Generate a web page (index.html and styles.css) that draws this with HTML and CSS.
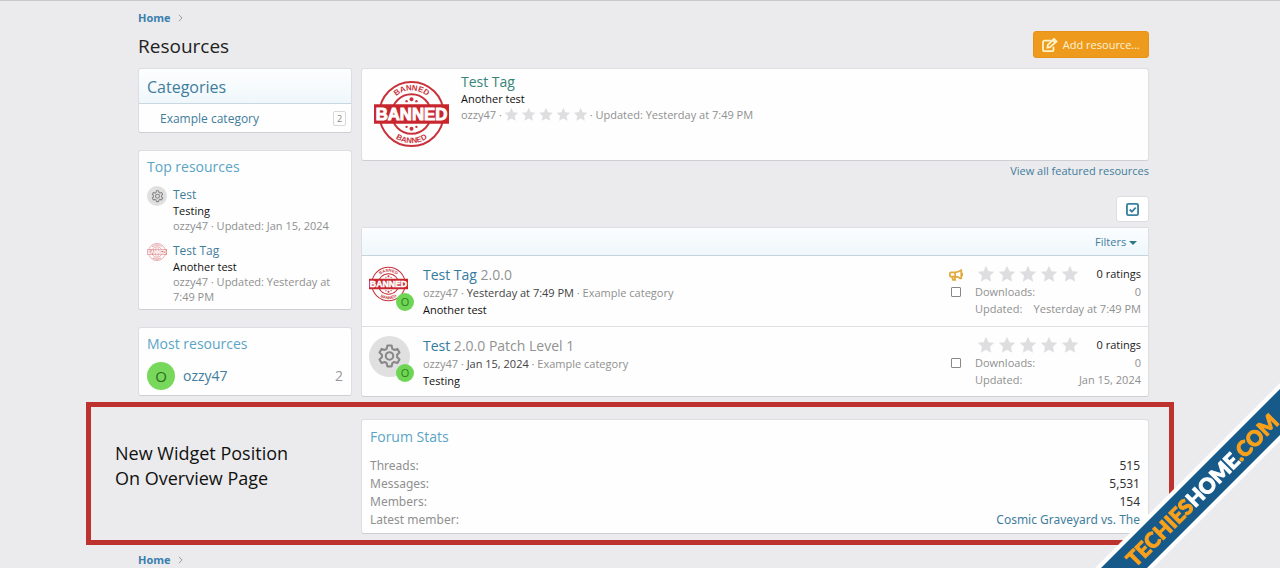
FILE: index.html
```
<!DOCTYPE html>
<html lang="en">
<head>
    <meta charset="UTF-8">
    <meta name="viewport" content="width=device-width, initial-scale=1.0">
    <title>Resources</title>
    <link rel="stylesheet" href="styles.css">
</head>
<body>
    <!-- Shared icons -->
    <svg class="sprite" aria-hidden="true">
        <symbol id="star" viewBox="0 0 24 24">
            <path d="M12 1l3.3 7.2 7.7.9-5.7 5.3 1.5 7.8L12 18.300l-6.800 3.900 1.500-7.800L1 9.100l7.700-.9z"/>
        </symbol>
        <symbol id="stars" viewBox="0 0 102 18">
            <use href="#star" x="0" y="0" width="18" height="18"/>
            <use href="#star" x="21" y="0" width="18" height="18"/>
            <use href="#star" x="42" y="0" width="18" height="18"/>
            <use href="#star" x="63" y="0" width="18" height="18"/>
            <use href="#star" x="84" y="0" width="18" height="18"/>
        </symbol>
        <symbol id="gear" viewBox="0 0 24 24">
            <g fill="none" stroke="currentColor" stroke-width="2" stroke-linejoin="round">
                <path d="M10 1.500h4l.7 3.100 1.900 1.100 3-1 2 3.500-2.300 2.100v2.400l2.300 2.100-2 3.500-3-1-1.900 1.100-.7 3.100h-4l-.7-3.100-1.900-1.100-3 1-2-3.500 2.300-2.100v-2.400L2.400 8.200l2-3.500 3 1 1.900-1.100z"/>
                <circle cx="12" cy="11.500" r="3.600"/>
            </g>
        </symbol>
        <symbol id="banned" viewBox="0 0 76 70">
            <defs>
                <path id="arc-top" d="M14 35a24 24 0 0 1 48 0"/>
                <path id="arc-bottom" d="M8.500 35a29.500 29.500 0 0 0 59 0"/>
            </defs>
            <g fill="none" stroke="#c8323c">
                <circle cx="38" cy="35" r="32.500" stroke-width="2"/>
                <circle cx="38" cy="35" r="20" stroke-width="2"/>
            </g>
            <g class="stamp-small">
                <text text-anchor="middle"><textPath href="#arc-top" startOffset="50%">BANNED</textPath></text>
                <text text-anchor="middle"><textPath href="#arc-bottom" startOffset="50%">BANNED</textPath></text>
            </g>
            <g fill="#c8323c">
                <circle cx="38" cy="20" r="2"/>
                <circle cx="33" cy="22" r="1.200"/>
                <circle cx="43" cy="22" r="1.200"/>
                <circle cx="38" cy="50" r="2"/>
                <circle cx="33" cy="48" r="1.200"/>
                <circle cx="43" cy="48" r="1.200"/>
            </g>
            <path fill="#c8262e" d="M0 25h76v20H0z"/>
            <text class="stamp-big" x="38" y="41" text-anchor="middle">BANNED</text>
        </symbol>
    </svg>

    <div class="page">
        <nav class="breadcrumb">
            <a href="#">Home</a>
            <svg viewBox="0 0 6 10"><path d="M1 1l4 4-4 4"/></svg>
        </nav>

        <header class="page-header">
            <h1>Resources</h1>
            <button type="button" class="button-add">
                <svg viewBox="0 0 18 16">
                    <path d="M10 3H3a2 2 0 0 0-2 2v8a2 2 0 0 0 2 2h8a2 2 0 0 0 2-2v-3"/>
                    <path d="M6 11l.500-3L13.500 1l3 3-7.500 6.500zM12 2.500l3 3"/>
                </svg>
                Add resource...
            </button>
        </header>

        <div class="layout">
            <aside class="sidebar">
                <section class="card">
                    <h2 class="card-header"><a href="#">Categories</a></h2>
                    <div class="category">
                        <a href="#">Example category</a>
                        <span class="count">2</span>
                    </div>
                </section>

                <section class="card widget">
                    <h3>Top resources</h3>
                    <div class="top-item">
                        <span class="icon-small"><svg><use href="#gear"/></svg></span>
                        <div>
                            <a href="#">Test</a>
                            <p class="tagline">Testing</p>
                            <p class="meta">ozzy47 · Updated: Jan 15, 2024</p>
                        </div>
                    </div>
                    <div class="top-item">
                        <svg class="stamp-icon"><use href="#banned"/></svg>
                        <div>
                            <a href="#">Test Tag</a>
                            <p class="tagline">Another test</p>
                            <p class="meta">ozzy47 · Updated: Yesterday at 7:49 PM</p>
                        </div>
                    </div>
                </section>

                <section class="card widget">
                    <h3>Most resources</h3>
                    <div class="member">
                        <span class="avatar">O</span>
                        <a href="#">ozzy47</a>
                        <span class="member-count">2</span>
                    </div>
                </section>
            </aside>

            <main class="content">
                <section class="card featured">
                    <svg class="featured-icon"><use href="#banned"/></svg>
                    <div>
                        <a class="featured-title" href="#">Test Tag</a>
                        <p class="tagline">Another test</p>
                        <p class="meta featured-meta">ozzy47 · <svg class="stars-small"><use href="#stars"/></svg> · Updated: Yesterday at 7:49 PM</p>
                    </div>
                </section>
                <a class="view-all" href="#">View all featured resources</a>

                <button type="button" class="button-select" aria-label="Select all">
                    <svg viewBox="0 0 14 14"><rect x="1" y="1" width="12" height="12" rx="1.500"/><path d="M4 7l2.300 2.300L10.500 5"/></svg>
                </button>

                <section class="card list">
                    <div class="filters"><a href="#">Filters <span class="caret"></span></a></div>

                    <article class="resource">
                        <div class="resource-icon">
                            <svg class="resource-stamp"><use href="#banned"/></svg>
                            <span class="avatar-mini">O</span>
                        </div>
                        <div class="resource-main">
                            <h4><a href="#">Test Tag</a> 2.0.0</h4>
                            <p class="meta">ozzy47 · <time>Yesterday at 7:49 PM</time> · Example category</p>
                            <p class="tagline">Another test</p>
                        </div>
                        <div class="flags">
                            <svg class="horn" viewBox="0 0 16 14"><path d="M14 1v11M14 2C11 4 9 4.500 7 4.500H2.500A1.500 1.500 0 0 0 1 6v2a1.500 1.500 0 0 0 1.500 1.500H7c2 0 4 .5 7 2.500M7 4.500v5M3.500 9.500l1 3.500h2.500l-.8-3.500M14 5.500a1.500 1.500 0 0 1 0 3"/></svg>
                            <input type="checkbox" aria-label="Select Test Tag">
                        </div>
                        <div class="stats">
                            <div class="rating"><svg class="stars"><use href="#stars"/></svg><span>0 ratings</span></div>
                            <dl><dt>Downloads:</dt><dd>0</dd></dl>
                            <dl><dt>Updated:</dt><dd>Yesterday at 7:49 PM</dd></dl>
                        </div>
                    </article>

                    <article class="resource">
                        <div class="resource-icon">
                            <span class="icon-large"><svg><use href="#gear"/></svg></span>
                            <span class="avatar-mini">O</span>
                        </div>
                        <div class="resource-main">
                            <h4><a href="#">Test</a> 2.0.0 Patch Level 1</h4>
                            <p class="meta">ozzy47 · <time>Jan 15, 2024</time> · Example category</p>
                            <p class="tagline">Testing</p>
                        </div>
                        <div class="flags">
                            <input type="checkbox" aria-label="Select Test">
                        </div>
                        <div class="stats">
                            <div class="rating"><svg class="stars"><use href="#stars"/></svg><span>0 ratings</span></div>
                            <dl><dt>Downloads:</dt><dd>0</dd></dl>
                            <dl><dt>Updated:</dt><dd>Jan 15, 2024</dd></dl>
                        </div>
                    </article>
                </section>
            </main>
        </div>

        <div class="highlight">
            <p class="note">New Widget Position<br>On Overview Page</p>
            <section class="card forum-stats">
                <h3>Forum Stats</h3>
                <dl><dt>Threads:</dt><dd>515</dd></dl>
                <dl><dt>Messages:</dt><dd>5,531</dd></dl>
                <dl><dt>Members:</dt><dd>154</dd></dl>
                <dl><dt>Latest member:</dt><dd><a href="#">Cosmic Graveyard vs. The</a></dd></dl>
            </section>
        </div>

        <nav class="breadcrumb">
            <a href="#">Home</a>
            <svg viewBox="0 0 6 10"><path d="M1 1l4 4-4 4"/></svg>
        </nav>
    </div>

    <!-- Corner ribbon -->
    <svg class="ribbon" viewBox="0 0 190 190">
        <path fill="#fff" d="M5 190L190 5v58L63 190z"/>
        <path fill="#175a8a" d="M11 190L190 11v46L57 190z"/>
        <text transform="translate(112 112) rotate(-45)" y="8" text-anchor="middle"><tspan>TECHIES</tspan><tspan class="ribbon-white">HOME</tspan><tspan>.COM</tspan></text>
    </svg>
</body>
</html>
```
FILE: styles.css
```
* {
    margin: 0;
    padding: 0;
    box-sizing: border-box;
}

body {
    font-family: "Open Sans", "Noto Sans", sans-serif;
    font-size: 11px;
    line-height: 16px;
    color: #222;
    background-color: #ebebed;
    border-top: 1px solid #c8c8ca;
    overflow: hidden;
}

a {
    color: #3f7d9c;
    text-decoration: none;
}

button {
    font: inherit;
    cursor: pointer;
}

.sprite {
    display: none;
}

.page {
    padding: 9px 131px 0 138px;
}

.breadcrumb {
    display: flex;
    align-items: center;
    gap: 7px;
    height: 16px;
}

.breadcrumb a {
    font-weight: bold;
    color: #3a7fae;
}

.breadcrumb svg {
    width: 5px;
    height: 8px;
    fill: none;
    stroke: #888;
}

.page-header {
    display: flex;
    justify-content: space-between;
    align-items: center;
    height: 27px;
    margin: 5px 0 10px;
}

.page-header h1 {
    padding-top: 3px;
    font-size: 19px;
    font-weight: normal;
}

.button-add {
    display: flex;
    align-items: center;
    gap: 5px;
    height: 27px;
    padding: 0 8px;
    color: #fff3d6;
    background-color: #ee9a1c;
    border: 1px solid #e8921a;
    border-radius: 3px;
}

.button-add svg {
    width: 16px;
    height: 14px;
    fill: none;
    stroke: #fff3c8;
    stroke-width: 2;
}

.layout {
    display: flex;
    align-items: flex-start;
    gap: 9px;
}

.sidebar {
    display: flex;
    flex-direction: column;
    gap: 17px;
    flex: 0 0 214px;
}

.content {
    display: flex;
    flex-direction: column;
    flex: 1;
}

.card {
    background-color: #fefefe;
    border: 1px solid #dcdee2;
    border-bottom-color: #cccfd4;
    border-radius: 3px;
}

.card-header {
    padding: 6px 8px 4px;
    font-size: 16px;
    font-weight: normal;
    line-height: 24px;
    background: linear-gradient(#fdfefe, #eff7fb);
    border-bottom: 1px solid #c8d8e0;
    border-radius: 3px 3px 0 0;
}

.category {
    display: flex;
    justify-content: space-between;
    align-items: center;
    height: 28px;
    padding: 1px 5px 0 21px;
    font-size: 12px;
}

.count {
    width: 13px;
    height: 15px;
    font-size: 9px;
    line-height: 14px;
    text-align: center;
    color: #888;
    border: 1px solid #d8d8d8;
    border-radius: 2px;
}

h3 {
    font-size: 14px;
    font-weight: normal;
    line-height: 20px;
    color: #5aa5c5;
}

.widget {
    padding: 6px 8px 5px;
}

.tagline {
    color: #111;
}

.meta {
    color: #909090;
}

.top-item {
    display: flex;
    gap: 6px;
    padding-top: 9px;
    line-height: 15px;
}

.top-item a {
    display: block;
    font-size: 12px;
    line-height: 17px;
}

.icon-small,
.icon-large {
    display: flex;
    justify-content: center;
    align-items: center;
    flex: none;
    width: 20px;
    height: 20px;
    color: #888;
    background-color: #e0e0e0;
    border-radius: 50%;
}

.icon-small svg {
    width: 13px;
    height: 13px;
}

.stamp-icon {
    flex: none;
    width: 20px;
    height: 20px;
    opacity: .7;
}

.stamp-small {
    fill: #c8323c;
    font: bold 8px "Liberation Sans", Arial, sans-serif;
}

.stamp-big {
    fill: #fff;
    stroke: #fff;
    font: bold 17px "Liberation Sans", Arial, sans-serif;
}

.member {
    display: flex;
    align-items: center;
    gap: 8px;
    padding-top: 8px;
    font-size: 14px;
}

.avatar {
    width: 28px;
    height: 28px;
    font-size: 15px;
    line-height: 28px;
    text-align: center;
    color: #286b1c;
    background-color: #78d85c;
    border-radius: 50%;
}

.member-count {
    margin-left: auto;
    color: #999;
}

.featured {
    display: flex;
    gap: 12px;
    height: 93px;
    padding: 4px 12px;
}

.featured-icon {
    width: 75px;
    height: 70px;
    margin-top: 6px;
}

.featured-title {
    font-size: 14px;
    line-height: 18px;
    color: #368476;
}

.featured-meta {
    display: flex;
    align-items: center;
    gap: 2px;
    line-height: 14px;
}

.stars-small,
.stars {
    width: 84px;
    height: 15px;
    fill: #dedee0;
}

.view-all {
    align-self: flex-end;
    margin: 2px 0 17px;
}

.button-select {
    display: flex;
    justify-content: center;
    align-items: center;
    align-self: flex-end;
    width: 33px;
    height: 26px;
    margin-bottom: 5px;
    background-color: #fff;
    border: 1px solid #dcdee2;
    border-radius: 3px;
}

.button-select svg {
    width: 13px;
    height: 13px;
    fill: none;
    stroke: #3a80a0;
    stroke-width: 2;
}

.filters {
    height: 28px;
    padding: 6px 11px;
    text-align: right;
    background: linear-gradient(#fbfdfe, #eff7fb);
    border-bottom: 1px solid #c4d4dc;
}

.caret {
    display: inline-block;
    vertical-align: middle;
    border: 4px solid transparent;
    border-top-color: #2c7a80;
    border-bottom: 0;
}

.resource {
    display: flex;
    height: 70px;
    padding: 9px 7px;
}

.resource + .resource {
    border-top: 1px solid #dedfe3;
}

.resource-icon {
    position: relative;
    width: 42px;
    height: 44px;
    margin-right: 12px;
}

.resource-stamp {
    width: 39px;
    height: 38px;
}

.icon-large {
    width: 41px;
    height: 41px;
}

.icon-large svg {
    width: 25px;
    height: 25px;
}

.avatar-mini {
    position: absolute;
    right: -3px;
    bottom: -2px;
    width: 18px;
    height: 18px;
    font-size: 11px;
    line-height: 18px;
    text-align: center;
    color: #2d8020;
    background-color: #6fd655;
    border-radius: 50%;
}

.resource-main {
    flex: 1;
    line-height: 17px;
}

.resource-main h4 {
    padding-top: 1px;
    font-size: 14px;
    font-weight: normal;
    line-height: 18px;
    color: #929292;
}

.resource-main a {
    color: #337ca0;
}

.resource-main time {
    color: #444;
}

.flags {
    display: flex;
    flex-direction: column;
    justify-content: flex-end;
    align-items: center;
    gap: 6px;
    width: 16px;
    height: 32px;
    margin-right: 11px;
}

.horn {
    width: 14px;
    height: 13px;
    fill: none;
    stroke: #e0aa3c;
    stroke-width: 2;
}

.flags input {
    appearance: none;
    width: 10px;
    height: 10px;
    background-color: #fff;
    border: 1px solid #888;
    border-radius: 1px;
}

.stats {
    width: 166px;
}

.stats .stars {
    width: 106px;
    height: 18px;
}

.rating {
    display: flex;
    justify-content: space-between;
    align-items: center;
}

dl {
    display: flex;
    justify-content: space-between;
    line-height: 17px;
    color: #909090;
}

.highlight {
    display: flex;
    justify-content: space-between;
    height: 143px;
    margin: 5px -25px 7px -52px;
    padding: 12px 20px 6px 24px;
    border: 5px solid #bd322f;
}

.note {
    padding-top: 22px;
    font-size: 18px;
    line-height: 25px;
    color: #111;
}

.forum-stats {
    width: 788px;
    padding: 7px 8px 6px;
    font-size: 12px;
}

.forum-stats h3 {
    margin-bottom: 10px;
}

.forum-stats dl {
    font-family: "Noto Sans", sans-serif;
    line-height: 18px;
}

.forum-stats dd {
    color: #333;
}

.ribbon {
    position: fixed;
    right: 0;
    bottom: 0;
    width: 190px;
    height: 190px;
}

.ribbon text {
    fill: #f9a11b;
    stroke: #f9a11b;
    font: 900 21px Lato, sans-serif;
}

.ribbon .ribbon-white {
    fill: #fff;
    stroke: #fff;
}
```
